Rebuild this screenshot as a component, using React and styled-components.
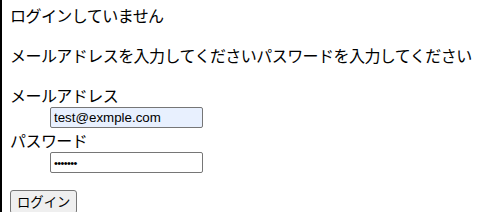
import styled, { createGlobalStyle } from "styled-components";

const GlobalStyle = createGlobalStyle`
  html, body {
    margin: 0;
    background: #fff;
  }
  body {
    font-family: "Noto Sans CJK JP", "Noto Sans", sans-serif;
    color: #000;
  }
`;

const Page = styled.div`
  border-left: 2px solid #000;
  min-height: 212px;
  box-sizing: border-box;
  padding: 4px 8px 0 8px;
`;

const Message = styled.div`
  font-size: 16px;
  line-height: 22px;
  letter-spacing: -0.55px;
  margin-bottom: ${(p) => p.$gap || 0}px;
`;

const Fields = styled.dl`
  margin: 0 0 14px 0;
`;

const Label = styled.dt`
  font-size: 16px;
  line-height: 22px;
  letter-spacing: -0.55px;
`;

const Field = styled.dd`
  margin: 0 0 0 40px;
  padding: 1px 0;
`;

const Input = styled.input`
  display: block;
  box-sizing: border-box;
  width: 153px;
  height: 21px;
  margin: 0;
  padding: 1px 3px;
  border: 1px solid #767676;
  border-radius: 2px;
  font-family: "Liberation Sans", Arial, sans-serif;
  font-size: ${(p) => (p.type === "password" ? "11px" : "13.33px")};
  letter-spacing: ${(p) => (p.type === "password" ? "-0.6px" : "0")};
  color: #000;
  background: ${(p) => (p.$filled ? "#e8f0fe" : "#fff")};
  outline: none;
`;

const Button = styled.button`
  box-sizing: border-box;
  height: 24px;
  padding: 0 6px;
  border: 1px solid #767676;
  border-radius: 3px;
  background: #efefef;
  font-family: "Noto Sans CJK JP", sans-serif;
  font-size: 13.33px;
  color: #000;
`;

function App() {
  return (
    <>
      <GlobalStyle />
      <Page>
        <Message $gap={18}>ログインしていません</Message>
        <Message $gap={18}>
          メールアドレスを入力してくださいパスワードを入力してください
        </Message>
        <Fields>
          <Label>メールアドレス</Label>
          <Field>
            <Input type="text" defaultValue="test@exmple.com" $filled />
          </Field>
          <Label>パスワード</Label>
          <Field>
            <Input type="password" defaultValue="1234567" />
          </Field>
        </Fields>
        <Button>ログイン</Button>
      </Page>
    </>
  );
}

export default App;
